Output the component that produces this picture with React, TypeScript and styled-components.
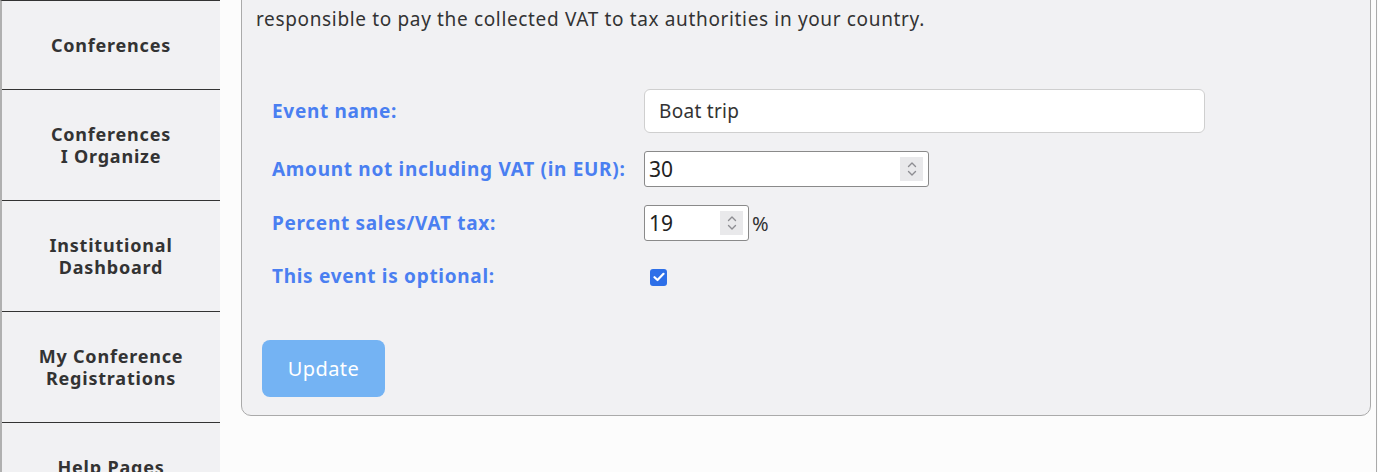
import React from 'react'
import styled, { createGlobalStyle } from 'styled-components'

const GlobalStyle = createGlobalStyle`
  html, body {
    margin: 0;
    padding: 0;
    background: #fcfcfc;
    font-family: "Noto Sans", "Open Sans", Arial, sans-serif;
    color: #333;
    overflow: hidden;
  }
`

const Page = styled.div`
  display: flex;
  align-items: flex-start;
  gap: 21px;
  height: 472px;
  width: 1377px;
  border-right: 1px solid #aaa;
  box-sizing: border-box;
  overflow: hidden;
`

const Sidebar = styled.nav`
  width: 220px;
  flex: none;
  background: #f1f1f3;
  border-left: 2px solid #b0b0b0;
  border-top: 1px solid #333;
  box-sizing: border-box;
  min-height: 472px;
`

const NavItem = styled.a`
  display: block;
  padding: 33px 4px;
  line-height: 22px;
  font-size: 18px;
  font-weight: 700;
  letter-spacing: 0.8px;
  text-align: center;
  color: #333;
  border-bottom: 1px solid #333;
  text-decoration: none;
`

const Main = styled.main`
  flex: 1;
  padding-right: 5px;
  min-width: 0;
`

const Card = styled.section`
  margin-top: -30px;
  background: #f1f1f3;
  border: 1px solid #aaa;
  border-radius: 10px;
  padding: 34px 15px 18px 14px;
`

const Intro = styled.p`
  margin: 0 0 56px;
  font-size: 19px;
  letter-spacing: 0.65px;
  line-height: 28px;
  color: #333;
`

const Form = styled.form`
  display: grid;
  grid-template-columns: 372px auto;
  align-items: center;
  row-gap: 18px;
  padding-left: 16px;
`

const Label = styled.label<{ $tall?: boolean }>`
  font-size: 19px;
  font-weight: 700;
  letter-spacing: 0.7px;
  color: #4a7ff1;
  white-space: nowrap;
  ${p => p.$tall && 'padding-top: 4px;'}
`

const TextInput = styled.input`
  width: 561px;
  height: 44px;
  box-sizing: border-box;
  border: 1px solid #cfcfcf;
  border-radius: 6px;
  background: #fff;
  padding: 0 14px;
  font: inherit;
  font-size: 19px;
  letter-spacing: 0.3px;
  color: #333;
  outline: none;
`

const Inline = styled.div`
  display: flex;
  align-items: center;
  gap: 3px;
  font-size: 20px;
`

const NumberBox = styled.div<{ $w: number }>`
  display: flex;
  align-items: center;
  width: ${p => p.$w}px;
  height: 36px;
  box-sizing: border-box;
  border: 1px solid #8a8a8a;
  border-radius: 3px;
  background: #fff;
  padding: 0 5px 0 4px;
`

const NumberField = styled.input`
  flex: 1;
  min-width: 0;
  border: 0;
  outline: none;
  background: transparent;
  font: inherit;
  font-size: 21px;
  color: #222;
  padding: 0;
`

const Spinner = styled.span`
  display: flex;
  align-items: center;
  justify-content: center;
  width: 23px;
  height: 24px;
  background: #e9e9eb;
`

const CheckCell = styled.div`
  padding-top: 4px;
`

const Check = styled.span`
  display: inline-flex;
  align-items: center;
  justify-content: center;
  width: 17px;
  height: 17px;
  margin-left: 6px;
  border-radius: 3px;
  background: #2d6fe8;
`

const UpdateButton = styled.button`
  margin-top: 51px;
  margin-left: 6px;
  width: 123px;
  height: 57px;
  border: 0;
  border-radius: 8px;
  background: #74b3f3;
  color: #fff;
  font: inherit;
  font-size: 20px;
  letter-spacing: 0.4px;
`

const Chevrons = () => (
  <svg width="12" height="18" viewBox="0 0 12 18" fill="none" stroke="#8d8d92" strokeWidth="1.4" strokeLinecap="round" strokeLinejoin="round">
    <path d="M2.5 6.5 6 3l3.5 3.5" />
    <path d="M2.5 11.5 6 15l3.5-3.5" />
  </svg>
)

const navItems = [
  ['Conferences'],
  ['Conferences', 'I Organize'],
  ['Institutional', 'Dashboard'],
  ['My Conference', 'Registrations'],
  ['Help Pages'],
]

const App = () => {
  return (
    <>
      <GlobalStyle />
      <Page>
        <Sidebar>
          {navItems.map((lines, i) => (
            <NavItem key={i}>
              {lines.map((l, j) => (
                <React.Fragment key={j}>
                  {j > 0 && <br />}
                  {l}
                </React.Fragment>
              ))}
            </NavItem>
          ))}
        </Sidebar>
        <Main>
          <Card>
            <Intro>responsible to pay the collected VAT to tax authorities in your country.</Intro>
            <Form onSubmit={e => e.preventDefault()}>
              <Label>Event name:</Label>
              <div>
                <TextInput defaultValue="Boat trip" />
              </div>
              <Label>Amount not including VAT (in EUR):</Label>
              <Inline>
                <NumberBox $w={285}>
                  <NumberField defaultValue="30" />
                  <Spinner><Chevrons /></Spinner>
                </NumberBox>
              </Inline>
              <Label>Percent sales/VAT tax:</Label>
              <Inline>
                <NumberBox $w={105}>
                  <NumberField defaultValue="19" />
                  <Spinner><Chevrons /></Spinner>
                </NumberBox>
                %
              </Inline>
              <Label $tall>This event is optional:</Label>
              <CheckCell>
                <Check>
                  <svg width="12" height="10" viewBox="0 0 12 10" fill="none" stroke="#fff" strokeWidth="2.2" strokeLinecap="round" strokeLinejoin="round">
                    <path d="M1.5 5.2 4.5 8 10.5 1.8" />
                  </svg>
                </Check>
              </CheckCell>
            </Form>
            <UpdateButton type="button">Update</UpdateButton>
          </Card>
        </Main>
      </Page>
    </>
  )
}

export default App
